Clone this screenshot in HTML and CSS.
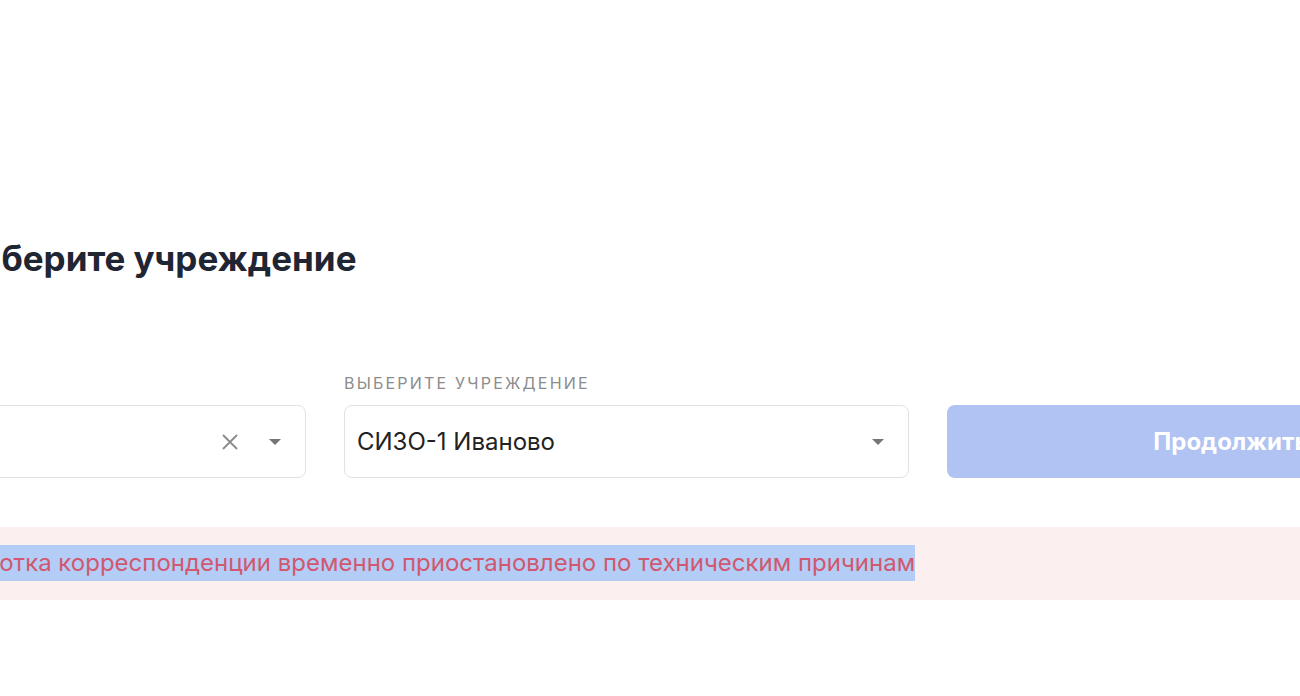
FILE: index.html
```html
<!DOCTYPE html>
<html>
<head>
    <meta charset="utf-8" />
    <title>Выберите учреждение</title>
    <link rel="stylesheet" href="styles.css">
</head>
<body>
    <main class="page">
        <div class="inner">
            <h1 class="title">Выберите учреждение</h1>
            <div class="form-row">
                <div class="field">
                    <div class="select">
                        <span class="value placeholder"></span>
                        <span class="clear">
                            <svg width="18" height="18" viewBox="0 0 18 18"><path d="M2 2L16 16M16 2L2 16" stroke="#8a8a8a" stroke-width="1.8" fill="none"/></svg>
                        </span>
                        <span class="caret"></span>
                    </div>
                </div>
                <div class="field">
                    <label class="label">Выберите учреждение</label>
                    <div class="select">
                        <span class="value">СИЗО-1 Иваново</span>
                        <span class="caret"></span>
                    </div>
                </div>
                <div class="field">
                    <button class="btn" disabled>Продолжить</button>
                </div>
            </div>
        </div>
        <div class="alert">
            <span class="sel">Обработка корреспонденции временно приостановлено по техническим причинам</span>
        </div>
    </main>
</body>
</html>
```

FILE: styles.css
```css
* {box-sizing: border-box;}
body {margin: 0;background: #fff;font-family: Inter, "Noto Sans", sans-serif;color: #1f2533;overflow: hidden;}
.page {margin-left: -96px;padding-top: 232px;}
.inner {padding-left: 46px;}
.title {margin: 0;font-size: 35px;line-height: 52px;font-weight: 700;color: #1f2533;}

.form-row {display: grid;grid-template-columns: 356px 565px 568px;gap: 38px;align-items: end;margin-top: 89px;}
.field {display: flex;flex-direction: column;}
.label {font-size: 16px;line-height: 20px;text-transform: uppercase;color: #8c8c8c;letter-spacing: 2.2px;margin-bottom: 12px;}
.select {height: 73px;border: 1px solid #e2e2e2;border-radius: 8px;display: flex;align-items: center;padding: 0 24px 0 12px;background: #fff;}
.select .value {flex: 1;font-size: 24px;color: #222;}
.clear {display: flex;margin-right: 30px;}
.caret {width: 0;height: 0;border-left: 6px solid transparent;border-right: 6px solid transparent;border-top: 6px solid #757575;}

.btn {height: 73px;border: 0;border-radius: 8px;background: #b1c3f2;color: #fff;font-family: inherit;font-size: 24px;font-weight: 700;}

.alert {margin-top: 49px;background: #fcefef;padding: 18px 20px 19px;font-size: 24px;line-height: 36px;color: #d0586f;}
.sel {background: #b3cdf6;padding: 3px 0 4px;}
```
